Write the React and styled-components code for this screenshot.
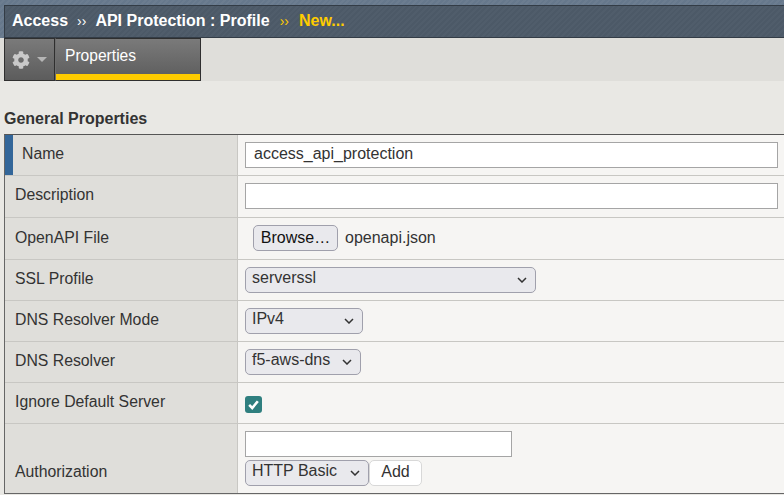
import React from "react";
import styled, { createGlobalStyle } from "styled-components";
import { FaCog } from "react-icons/fa";

const GlobalStyle = createGlobalStyle`
  html, body {
    margin: 0;
    padding: 0;
    background: #e9e8e4;
    overflow: hidden;
  }
  body {
    font-family: "Liberation Sans", Arial, sans-serif;
    font-size: 16px;
    color: #333;
  }
`;

const App = () => {
  return (
    <Page>
      <GlobalStyle />
      <TopStrip>
        <TitleBar>
          <Crumb>Access</Crumb>
          <Sep>››</Sep>
          <Crumb>API Protection : Profile</Crumb>
          <Sep $active>››</Sep>
          <Crumb $active>New...</Crumb>
        </TitleBar>
      </TopStrip>
      <TabBar>
        <GearTab>
          <FaCog size={18} color="#c9c9c9" />
          <Caret />
        </GearTab>
        <Tab>Properties</Tab>
      </TabBar>
      <SectionTitle>General Properties</SectionTitle>
      <Table>
        <Row $h={41}>
          <Label $required>Name</Label>
          <Field>
            <TextInput $width={533} defaultValue="access_api_protection" />
          </Field>
        </Row>
        <Row $h={42}>
          <Label>Description</Label>
          <Field>
            <TextInput $width={533} />
          </Field>
        </Row>
        <Row $h={42}>
          <Label $top={11}>OpenAPI File</Label>
          <Field>
            <FileRow>
              <BrowseButton>Browse…</BrowseButton>
              <FileName>openapi.json</FileName>
            </FileRow>
          </Field>
        </Row>
        <Row $h={41}>
          <Label>SSL Profile</Label>
          <Field>
            <Select $width={291} value="serverssl" />
          </Field>
        </Row>
        <Row $h={41}>
          <Label>DNS Resolver Mode</Label>
          <Field>
            <Select $width={118} value="IPv4" />
          </Field>
        </Row>
        <Row $h={41}>
          <Label>DNS Resolver</Label>
          <Field>
            <Select $width={116} value="f5-aws-dns" />
          </Field>
        </Row>
        <Row $h={41}>
          <Label>Ignore Default Server</Label>
          <Field>
            <Checkbox>
              <svg width="13" height="13" viewBox="0 0 12 12" fill="none">
                <path d="M2 6.4 L4.8 9.2 L10 3" stroke="#fff" strokeWidth="2.4" />
              </svg>
            </Checkbox>
          </Field>
        </Row>
        <Row $h={69} $last>
          <Label $bottom>Authorization</Label>
          <AuthField>
            <TextInput $width={267} />
            <AuthControls>
              <Select $width={124} value="HTTP Basic" />
              <AddButton>Add</AddButton>
            </AuthControls>
          </AuthField>
        </Row>
      </Table>
    </Page>
  );
};

const Select = ({ value, $width }) => (
  <SelectBox $width={$width}>
    <span>{value}</span>
    <svg width="10" height="6" viewBox="0 0 10 6" fill="none">
      <path d="M1 1 L5 5 L9 1" stroke="#333" strokeWidth="1.5" />
    </svg>
  </SelectBox>
);

export default App;

const Page = styled.div`
  width: 784px;
  height: 495px;
  overflow: hidden;
`;

const TopStrip = styled.div`
  height: 38px;
  padding-top: 5px;
  padding-left: 4px;
  box-sizing: border-box;
  background: repeating-linear-gradient(
    135deg,
    #66788c 0,
    #66788c 2px,
    #6c7d90 2px,
    #6c7d90 4px
  );
`;

const TitleBar = styled.div`
  height: 33px;
  box-sizing: border-box;
  border-top: 1px solid #333c46;
  border-left: 1px solid #333c46;
  border-bottom: 1px solid #333c46;
  background: repeating-linear-gradient(
    135deg,
    #4c5967 0,
    #4c5967 2px,
    #505d6b 2px,
    #505d6b 4px
  );
  display: flex;
  align-items: center;
  padding: 0 0 1px 7px;
  font-weight: 700;
  font-size: 16px;
`;

const Crumb = styled.span`
  color: ${(p) => (p.$active ? "#fc0" : "#fff")};
`;

const Sep = styled.span`
  color: ${(p) => (p.$active ? "#fc0" : "#fff")};
  font-weight: 400;
  font-size: 14px;
  margin: 0 ${(p) => (p.$active ? "10px 0 10px" : "9px 0 9px")};
`;

const TabBar = styled.div`
  height: 43px;
  background: #dfdeda;
  padding-left: 4px;
  display: flex;
`;

const GearTab = styled.div`
  width: 51px;
  height: 43px;
  box-sizing: border-box;
  border: 1px solid #2f2f2f;
  background: linear-gradient(#7a7a7a, #5c5c5c);
  display: flex;
  align-items: center;
  justify-content: center;
  gap: 7px;
`;

const Caret = styled.span`
  width: 0;
  height: 0;
  border-left: 5px solid transparent;
  border-right: 5px solid transparent;
  border-top: 5px solid #b5b5b5;
`;

const Tab = styled.div`
  width: 146px;
  height: 43px;
  box-sizing: border-box;
  border: 1px solid #2f2f2f;
  border-left: 1px solid #6e6e6e;
  background: linear-gradient(#7a7a7a, #5c5c5c);
  box-shadow: inset 0 -6px 0 #fc0;
  padding: 8px 0 0 9px;
  color: #fff;
  font-size: 15.6px;
  line-height: 18px;
`;

const SectionTitle = styled.h2`
  margin: 0;
  padding: 29px 0 0 4px;
  height: 53px;
  box-sizing: border-box;
  font-size: 16px;
  line-height: 18px;
  font-weight: 700;
  color: #333;
`;

const Table = styled.div`
  margin-left: 4px;
  border-top: 1px solid #555;
  border-left: 1px solid #666;
  border-bottom: 1px solid #666;
`;

const Row = styled.div`
  display: grid;
  grid-template-columns: 233px 1fr;
  height: ${(p) => p.$h}px;
  box-sizing: border-box;
  border-bottom: ${(p) => (p.$last ? "0" : "1px solid #c8c7c3")};
`;

const Label = styled.div`
  background: #dfdeda;
  border-right: 1px solid #c8c7c3;
  color: #333;
  font-size: 15.8px;
  line-height: 18px;
  padding: ${(p) => p.$top || 10}px 0 0 10px;
  ${(p) =>
    p.$required &&
    `
    border-left: 8px solid #336699;
    padding-left: 9px;
  `}
  ${(p) =>
    p.$bottom &&
    `
    display: flex;
    align-items: flex-end;
    padding-bottom: 12px;
  `}
`;

const Field = styled.div`
  background: #f6f5f3;
  padding: 7px 0 0 7px;
`;

const AuthField = styled(Field)`
  display: flex;
  flex-direction: column;
  gap: 3px;
`;

const TextInput = styled.input`
  display: block;
  width: ${(p) => p.$width}px;
  height: 26px;
  box-sizing: border-box;
  border: 1px solid #a5a5a5;
  background: #fff;
  padding: 0 8px 2px;
  font: 16px "Liberation Sans", Arial, sans-serif;
  color: #333;
  outline: none;
`;

const FileRow = styled.div`
  display: flex;
  align-items: center;
  padding-left: 8px;
`;

const BrowseButton = styled.button`
  height: 26px;
  width: 85px;
  box-sizing: border-box;
  border: 1px solid #a0a0ac;
  border-radius: 5px;
  background: #e9e9ed;
  padding: 0;
  font: 16px "Liberation Sans", Arial, sans-serif;
  color: #111;
`;

const FileName = styled.span`
  margin-left: 7px;
  font-size: 16px;
  color: #333;
`;

const SelectBox = styled.div`
  width: ${(p) => p.$width}px;
  height: 26px;
  box-sizing: border-box;
  border: 1px solid #a0a0ac;
  border-radius: 5px;
  background: #e9e9ed;
  display: flex;
  align-items: center;
  justify-content: space-between;
  padding: 0 8px 0 6px;
  font-size: 16px;
  color: #333;
  span {
    position: relative;
    top: -2px;
  }
`;

const Checkbox = styled.div`
  width: 17px;
  height: 17px;
  margin-top: 6px;
  background: #2f7f7f;
  border-radius: 3px;
  display: flex;
  align-items: center;
  justify-content: center;
`;

const AuthControls = styled.div`
  display: flex;
`;

const AddButton = styled.button`
  width: 53px;
  height: 26px;
  box-sizing: border-box;
  border: 1px solid #d8d8d8;
  border-radius: 5px;
  background: #fff;
  padding: 0 0 2px;
  font: 16px "Liberation Sans", Arial, sans-serif;
  color: #333;
`;
